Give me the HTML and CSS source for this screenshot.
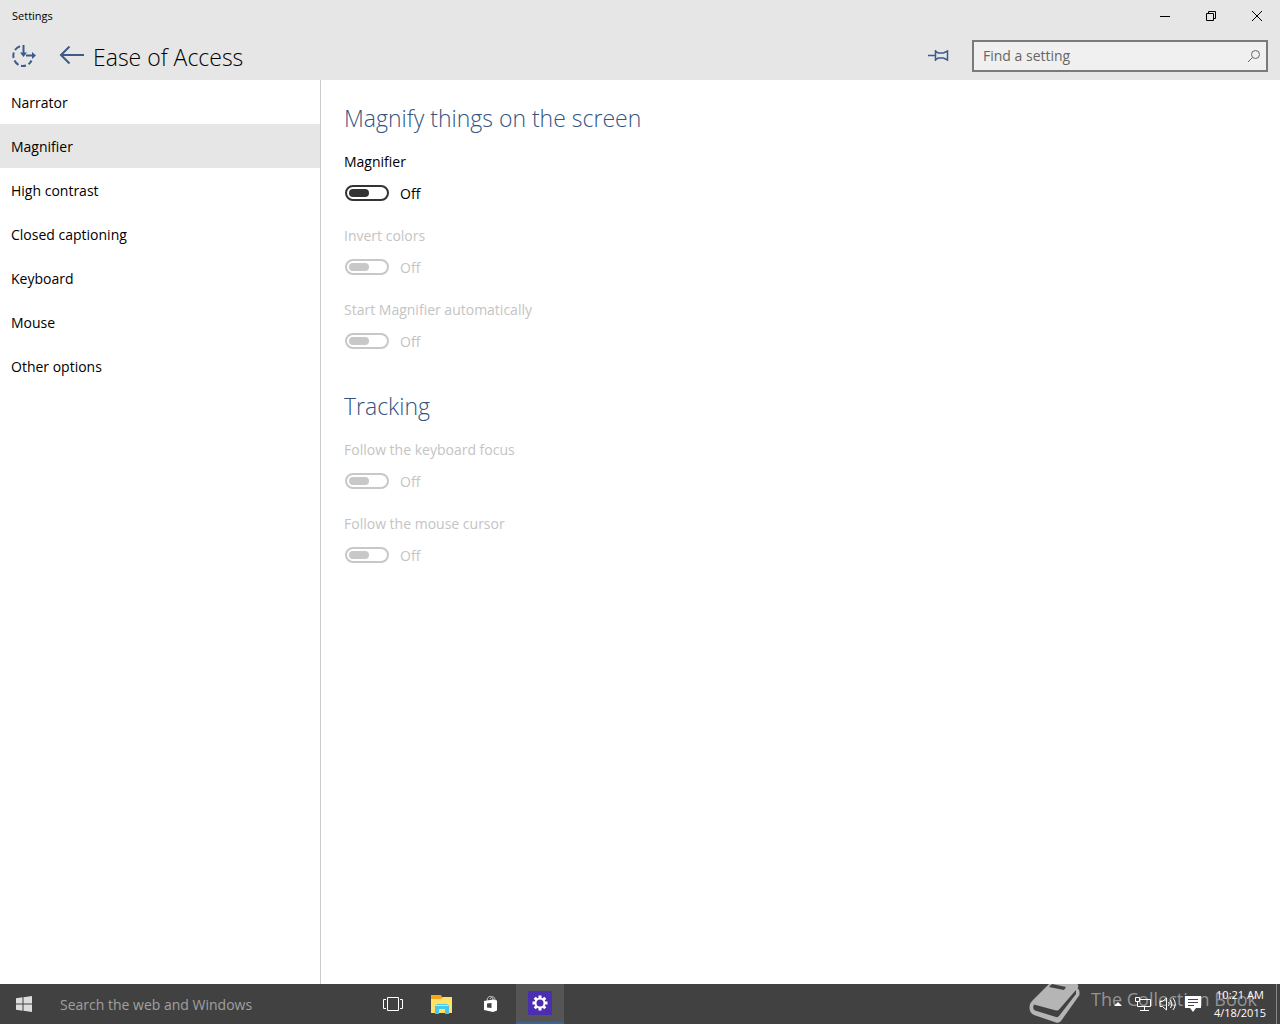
FILE: index.html
```html
<!DOCTYPE html>
<html lang="en">
<head>
  <meta charset="UTF-8" />
  <meta name="viewport" content="width=device-width, initial-scale=1.0" />
  <title>Settings</title>
  <link rel="stylesheet" href="styles.css">
</head>
<body>

<header>
  <div class="titlebar">
    <span class="app-name">Settings</span>
    <div class="window-buttons">
      <button type="button" aria-label="Minimize">
        <svg width="12" height="12" viewBox="0 0 12 12"><path d="M1 6.5h10" /></svg>
      </button>
      <button type="button" aria-label="Restore">
        <svg width="12" height="12" viewBox="0 0 12 12"><path d="M1.5 3.5h7v7h-7zM3.5 3.5v-2h7v7h-2" /></svg>
      </button>
      <button type="button" aria-label="Close">
        <svg width="12" height="12" viewBox="0 0 12 12"><path d="M1 1l10 10M11 1L1 11" /></svg>
      </button>
    </div>
  </div>

  <div class="page-bar">
    <svg class="access-icon" width="26" height="26" viewBox="0 0 26 26">
      <path d="M9 3.2A10 10 0 0 0 4 7M2.8 9.5A10 10 0 0 0 2.5 15M3.5 17.5A10 10 0 0 0 7.500 21.8M10 22.8A10 10 0 0 0 15 22.5M17.5 21.3A10 10 0 0 0 20.5 17.5" />
      <path d="M12.5 2v9M15 12.5h8" />
      <path class="solid" d="M9 9.500h7l-3.500 4.500zM21 9v7l4-3.500z" />
    </svg>
    <button type="button" class="back" aria-label="Back">
      <svg width="26" height="20" viewBox="0 0 26 20"><path d="M25 9H2M10.500 .5L2 9l8.500 8.500" /></svg>
    </button>
    <h1>Ease of Access</h1>
    <button type="button" class="pin" aria-label="Pin to Start">
      <svg width="22" height="14" viewBox="0 0 22 14"><path d="M0 6.500h7M7.500 1v11M7.500 2.500l3 1.500h5l4-2v9l-4-2h-5l-3 1.500" /></svg>
    </button>
    <div class="find">
      <input type="text" placeholder="Find a setting" aria-label="Find a setting" />
      <svg width="14" height="14" viewBox="0 0 14 14"><circle cx="8.500" cy="5.500" r="4" /><path d="M5.500 8.500L1 13" /></svg>
    </div>
  </div>
</header>

<div class="container">
  <nav>
    <a href="#">Narrator</a>
    <a href="#" class="active">Magnifier</a>
    <a href="#">High contrast</a>
    <a href="#">Closed captioning</a>
    <a href="#">Keyboard</a>
    <a href="#">Mouse</a>
    <a href="#">Other options</a>
  </nav>

  <main>
    <section>
      <h2>Magnify things on the screen</h2>
      <div class="setting">
        <label for="magnifier">Magnifier</label>
        <div class="toggle"><input type="checkbox" id="magnifier" /><span>Off</span></div>
      </div>
      <div class="setting disabled">
        <label for="invert">Invert colors</label>
        <div class="toggle"><input type="checkbox" id="invert" disabled /><span>Off</span></div>
      </div>
      <div class="setting disabled">
        <label for="autostart">Start Magnifier automatically</label>
        <div class="toggle"><input type="checkbox" id="autostart" disabled /><span>Off</span></div>
      </div>
    </section>

    <section>
      <h2>Tracking</h2>
      <div class="setting disabled">
        <label for="follow-keyboard">Follow the keyboard focus</label>
        <div class="toggle"><input type="checkbox" id="follow-keyboard" disabled /><span>Off</span></div>
      </div>
      <div class="setting disabled">
        <label for="follow-mouse">Follow the mouse cursor</label>
        <div class="toggle"><input type="checkbox" id="follow-mouse" disabled /><span>Off</span></div>
      </div>
    </section>
  </main>
</div>

<footer class="taskbar">
  <button type="button" class="start" aria-label="Start">
    <svg width="16" height="16" viewBox="0 0 16 16"><path d="M0 2.300L6.500 1.300V7.500H0zM7.500 1.200L16 0v7.500H7.500zM0 8.500h6.500v6.200L0 13.700zM7.500 8.500H16V16l-8.500-1.200z" /></svg>
  </button>
  <input type="text" class="task-search" placeholder="Search the web and Windows" aria-label="Search the web and Windows" />
  <div class="apps">
    <button type="button" aria-label="Task View">
      <svg width="20" height="14" viewBox="0 0 20 14" fill="none" stroke="#fff"><path d="M4.500 .5h11v13h-11zM3 2.500H.5v9H3M17 2.500h2.500v9H17" /></svg>
    </button>
    <button type="button" aria-label="File Explorer">
      <svg width="22" height="20" viewBox="0 0 22 20">
        <path fill="#f9a51a" d="M0 1h10l1 2h10v3H0z" />
        <path fill="#ffe267" d="M0 5h10l2-2h9v16H0z" />
        <path fill="#45c8ea" d="M4 20v-8l2-2h10l2 2v8h-4v-5H8v5z" />
        <path fill="#b9effb" d="M5 11h12v1H5z" />
      </svg>
    </button>
    <button type="button" aria-label="Store">
      <svg width="16" height="18" viewBox="0 0 16 18">
        <path fill="none" stroke="#ccc" d="M4 6c0-6 6-6 6-1M7 4c1-3 5-3 5 1" />
        <path fill="#fff" d="M1 6l9-1.500 4 1v10l-4 1.500-9-2z" />
        <path fill="#444" d="M4 8.500l4.500-.5v5L4 12.500z" />
      </svg>
    </button>
    <button type="button" class="active" aria-label="Settings">
      <svg width="24" height="24" viewBox="0 0 24 24">
        <path fill="#4b2fb0" d="M0 0h24v24H0z" />
        <circle cx="12" cy="12" r="4.500" fill="none" stroke="#fff" stroke-width="2" />
        <path stroke="#fff" stroke-width="3" d="M12 4.500v2.500M12 17v2.500M4.500 12H7M17 12h2.500M6.700 6.700l1.800 1.800M15.500 15.500l1.800 1.800M6.700 17.300l1.800-1.800M15.500 8.500l1.800-1.800" />
      </svg>
    </button>
  </div>

  <div class="watermark">
    <svg width="52" height="40" viewBox="0 0 52 40">
      <path fill="#b5b5b5" d="M20 0h28.500q1.500 2 0 4.500Q50.500 5 50.500 8v3L32 37q-2 2.500-5 1.500L5 31Q-1 28 1 20q1-2 3-4z" />
      <path fill="#424141" d="M5 20.500l22 6q2 .5 3.500-1.500L47 6v4L30 32q-1 1.500-3 1L6 26.500q-3-2-1-6z" />
      <path fill="#424141" d="M23 0l14 3-2 3-15-3z" />
    </svg>
    <span>The Collection Book</span>
  </div>

  <div class="tray">
    <button type="button" aria-label="Show hidden icons">
      <svg width="8" height="4" viewBox="0 0 8 4"><path fill="#fff" d="M4 0l4 4H0z" /></svg>
    </button>
    <button type="button" aria-label="Network">
      <svg width="18" height="14" viewBox="0 0 18 14" fill="none" stroke="#fff"><path d="M6 2.500h10.500v7h-13V6M10.500 10v3M6 13.500h9M1.500 .5h4v4h-4zM3.500 4v3" /></svg>
    </button>
    <button type="button" aria-label="Volume">
      <svg width="18" height="14" viewBox="0 0 18 14" fill="none" stroke="#fff"><path d="M1 4.500h2.500L7.500 1v12L3.500 9.500H1zM9.500 5q1.500 2 0 4M11.500 3q3 4 0 8M14 1q4.500 6 0 12" /></svg>
    </button>
    <button type="button" aria-label="Notifications">
      <svg width="16" height="16" viewBox="0 0 16 16"><path fill="#fff" d="M0 0h16v12h-5l-3 4-3-4H0z" /><path stroke="#444" d="M3 3.500h10M3 6.500h10M3 9.500h6" /></svg>
    </button>
    <div class="clock"><time>10:21 AM</time><time>4/18/2015</time></div>
  </div>
</footer>

</body>
</html>
```
FILE: styles.css
```css
* {
  box-sizing: border-box;
}

body {
  margin: 0;
  min-height: 100vh;
  display: flex;
  flex-direction: column;
  font-family: "Open Sans", "Noto Sans", sans-serif;
  font-size: 14px;
  line-height: 20px;
  color: #000;
  background: #fff;
}

button {
  display: flex;
  align-items: center;
  justify-content: center;
  padding: 0;
  border: none;
  background: none;
}

input {
  margin: 0;
  font: inherit;
}

header {
  background: #e6e6e6;
}

.titlebar {
  display: flex;
  justify-content: space-between;
  height: 32px;
}

.app-name {
  padding-left: 12px;
  font-size: 11px;
  line-height: 32px;
}

.window-buttons {
  display: flex;
}

.window-buttons button {
  width: 46px;
}

.window-buttons svg {
  fill: none;
  stroke: #000;
}

.page-bar {
  display: flex;
  align-items: center;
  height: 48px;
  padding: 0 12px 0 11px;
}

.access-icon {
  fill: none;
  stroke: #3c5a8c;
  stroke-width: 2;
}

.access-icon .solid {
  fill: #3c5a8c;
  stroke: none;
}

.back {
  margin: 0 8px 0 22px;
}

.back svg {
  fill: none;
  stroke: #3c5a8c;
  stroke-width: 2;
}

h1 {
  margin: 0;
  padding-top: 2px;
  font-size: 23px;
  font-weight: 300;
  line-height: 32px;
}

.pin {
  margin: 0 22px 0 auto;
}

.pin svg {
  fill: none;
  stroke: #3c5a8c;
  stroke-width: 1.5;
}

.find {
  display: flex;
  align-items: center;
  width: 296px;
  height: 32px;
  padding: 0 5px 0 9px;
  border: 2px solid #7a7a7a;
  background: #f0f0f0;
}

.find input {
  flex: 1;
  min-width: 0;
  padding: 0;
  border: none;
  background: none;
}

.find input::placeholder {
  color: #666;
}

.find svg {
  fill: none;
  stroke: #666;
}

.container {
  display: flex;
  flex: 1;
}

nav {
  width: 321px;
  border-right: 1px solid #ccc;
}

nav a {
  display: block;
  padding: 13px 11px 11px;
  color: #000;
  text-decoration: none;
}

nav a.active {
  background: #e6e6e6;
}

main {
  flex: 1;
  padding: 22px 23px;
}

section {
  margin-bottom: 39px;
}

h2 {
  margin: 0 0 18px;
  font-size: 23px;
  font-weight: 300;
  line-height: 32px;
  color: #34547f;
}

.setting {
  margin-bottom: 22px;
}

.setting label {
  display: block;
  margin-bottom: 11px;
}

.setting + .setting {
  margin-top: 23px;
}

.toggle {
  display: flex;
  align-items: center;
  gap: 11px;
  padding-left: 1px;
}

.toggle span {
  padding-top: 2px;
  line-height: 18px;
}

.toggle input {
  appearance: none;
  width: 44px;
  height: 16px;
  padding: 2px;
  border: 2px solid #333;
  border-radius: 8px;
}

.toggle input::before {
  content: "";
  display: block;
  width: 20px;
  height: 8px;
  border-radius: 4px;
  background: #333;
}

.disabled {
  color: #c4c4c4;
}

.disabled .toggle input {
  border-color: #c8c8c8;
}

.disabled .toggle input::before {
  background: #c8c8c8;
}

.taskbar {
  position: relative;
  display: flex;
  height: 40px;
  background: #424141;
}

.start {
  width: 48px;
}

.start svg {
  fill: #ddd;
}

.task-search {
  width: 321px;
  padding: 2px 12px 0;
  border: none;
  background: none;
}

.task-search::placeholder {
  color: #a0a0a0;
}

.apps {
  display: flex;
  gap: 1px;
}

.apps button {
  width: 48px;
}

.apps .active {
  background: #555;
  border-bottom: 2px solid #3f6494;
}

.watermark {
  position: absolute;
  top: 0;
  right: 23px;
  display: flex;
  gap: 10px;
  font-size: 18px;
  line-height: 30px;
  color: #939393;
}

.tray {
  position: relative;
  display: flex;
  margin-left: auto;
  margin-right: 3px;
  border-right: 1px solid #888;
}

.tray button {
  width: 25px;
}

.clock {
  display: flex;
  flex-direction: column;
  justify-content: center;
  margin: 0 10px 0 8px;
  font-size: 11px;
  line-height: 18px;
  text-align: center;
  color: #fff;
}
```
